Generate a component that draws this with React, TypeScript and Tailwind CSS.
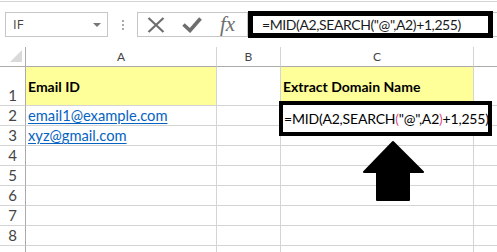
const cellFont = "font-['Lato','Open_Sans',sans-serif]";

function Corner() {
  return (
    <div className="flex items-end justify-end border-r border-b border-r-[#ababab] border-b-[#ababab] pr-[3px] pb-[4px]">
      <svg width="12" height="12" viewBox="0 0 12 12">
        <polygon points="12,0 12,12 0,12" fill="#dadada" />
      </svg>
    </div>
  );
}

function ColHead({ label, last }: { label: string; last?: boolean }) {
  return (
    <div
      className={`flex items-center justify-center border-b border-b-[#ababab] text-[12px] text-[#444] ${
        last ? "" : "border-r border-r-[#d4d4d4]"
      }`}
    >
      {label}
    </div>
  );
}

function RowHead({ n }: { n?: number }) {
  return (
    <div className="flex items-end justify-center border-r border-b border-r-[#ababab] border-b-[#d4d4d4] pb-[1px] text-[15px] leading-[18px] text-[#444]">
      {n}
    </div>
  );
}

function Cell({ children, className = "", last }: { children?: React.ReactNode; className?: string; last?: boolean }) {
  return (
    <div className={`border-b border-[#d4d4d4] ${last ? "" : "border-r"} ${className}`}>
      {children}
    </div>
  );
}

export default function App() {
  const rows = [4, 5, 6, 7, 8];

  return (
    <div className={`relative w-[497px] h-[252px] overflow-hidden bg-white ${cellFont}`}>
      {/* Top edge */}
      <div className="h-px mt-px bg-[#d4d4d4]" />

      {/* Formula bar */}
      <div className="relative flex items-center h-[25px] mt-[10px]">
        <div className="ml-[5px] w-[103px] h-[25px] border border-[#c6c6c6] flex items-center justify-between pl-[7px] pr-[6px]">
          <span className="text-[13px] text-[#444] font-['Open_Sans',sans-serif]">IF</span>
          <svg width="8" height="4" viewBox="0 0 8 4">
            <polygon points="0,0 8,0 4,4" fill="#777" />
          </svg>
        </div>
        <div className="w-[29px] flex flex-col items-center gap-[2px]">
          <div className="w-[2px] h-[2px] bg-[#aaa]" />
          <div className="w-[2px] h-[2px] bg-[#aaa]" />
          <div className="w-[2px] h-[2px] bg-[#aaa]" />
        </div>
        <div className="w-[111px] h-[25px] border border-[#c6c6c6] flex items-center pl-[9px] gap-[17px]">
          <svg width="18" height="16" viewBox="0 0 18 16">
            <path d="M1.5 1 L16.5 15 M16.5 1 L1.5 15" stroke="#6e6e6e" strokeWidth="2.2" />
          </svg>
          <svg width="20" height="16" viewBox="0 0 20 16">
            <path d="M1.5 7.5 L8 13.5 L18.5 1.5" stroke="#6e6e6e" strokeWidth="3.6" fill="none" />
          </svg>
          <span className="text-[21px] leading-none italic text-[#6e6e6e] font-['Liberation_Serif',serif] ml-[1px]">
            fx
          </span>
        </div>
        <div className="flex-1 h-[25px] border-y border-[#c6c6c6]" />
        {/* Annotation box over the formula input */}
        <div className="absolute left-[248px] top-[-1px] w-[245px] h-[27px] border-[5px] border-black bg-white flex items-center pl-[9px]">
          <span className="text-[14px] tracking-[-0.4px] text-[#1a1a1a] whitespace-nowrap">=MID(A2,SEARCH("@",A2)+1,255)</span>
        </div>
      </div>

      {/* Sheet grid */}
      <div className="mt-[10px] grid grid-cols-[26px_191px_64px_193px_1fr] grid-rows-[20px_39px_repeat(8,20px)]">
        <Corner />
        <ColHead label="A" />
        <ColHead label="B" />
        <ColHead label="C" />
        <ColHead label="" last />

        <RowHead n={1} />
        <Cell className="bg-[#ffff99] flex items-center pl-[2px] pt-[1px]">
          <span className="text-[14px] font-bold text-black">Email ID</span>
        </Cell>
        <Cell />
        <Cell className="bg-[#ffff99] flex items-center pl-[2px] pt-[1px]">
          <span className="text-[14px] font-bold text-black">Extract Domain Name</span>
        </Cell>
        <Cell last />

        <RowHead n={2} />
        <Cell className="flex items-end pl-[2px] pb-[1px]">
          <span className="text-[14.7px] leading-[18px] text-[#0563c1] underline underline-offset-[2px]">email1@example.com</span>
        </Cell>
        <Cell />
        <Cell className="relative">
          <div className="absolute left-[-2px] top-[-5px] w-[213px] h-[35px] z-10 border-[4px] border-black bg-white flex items-center pl-[1px]">
            <span className="text-[14px] tracking-[-0.2px] text-black whitespace-nowrap">
              =MID(A2,SEARCH<span className="text-[#e8508a]">(</span>"@",A2<span className="text-[#e8508a]">)</span>+1,255)
            </span>
          </div>
        </Cell>
        <Cell last />

        <RowHead n={3} />
        <Cell className="flex items-end pl-[2px] pb-[1px]">
          <span className="text-[14.7px] leading-[18px] text-[#0563c1] underline underline-offset-[2px]">xyz@gmail.com</span>
        </Cell>
        <Cell />
        <Cell />
        <Cell last />

        {rows.map((n) => (
          <div key={n} className="contents">
            <RowHead n={n} />
            <Cell />
            <Cell />
            <Cell />
            <Cell last />
          </div>
        ))}

        <RowHead />
        <Cell />
        <Cell />
        <Cell />
        <Cell last />
      </div>

      {/* Arrow annotation */}
      <svg className="absolute left-[362px] top-[140px]" width="64" height="62" viewBox="0 0 64 62">
        <polygon
          points="31,2 61,32 47,32 47,60 15,60 15,32 2,32"
          fill="black"
          stroke="black"
          strokeWidth="2"
          strokeLinejoin="round"
        />
      </svg>
    </div>
  );
}
